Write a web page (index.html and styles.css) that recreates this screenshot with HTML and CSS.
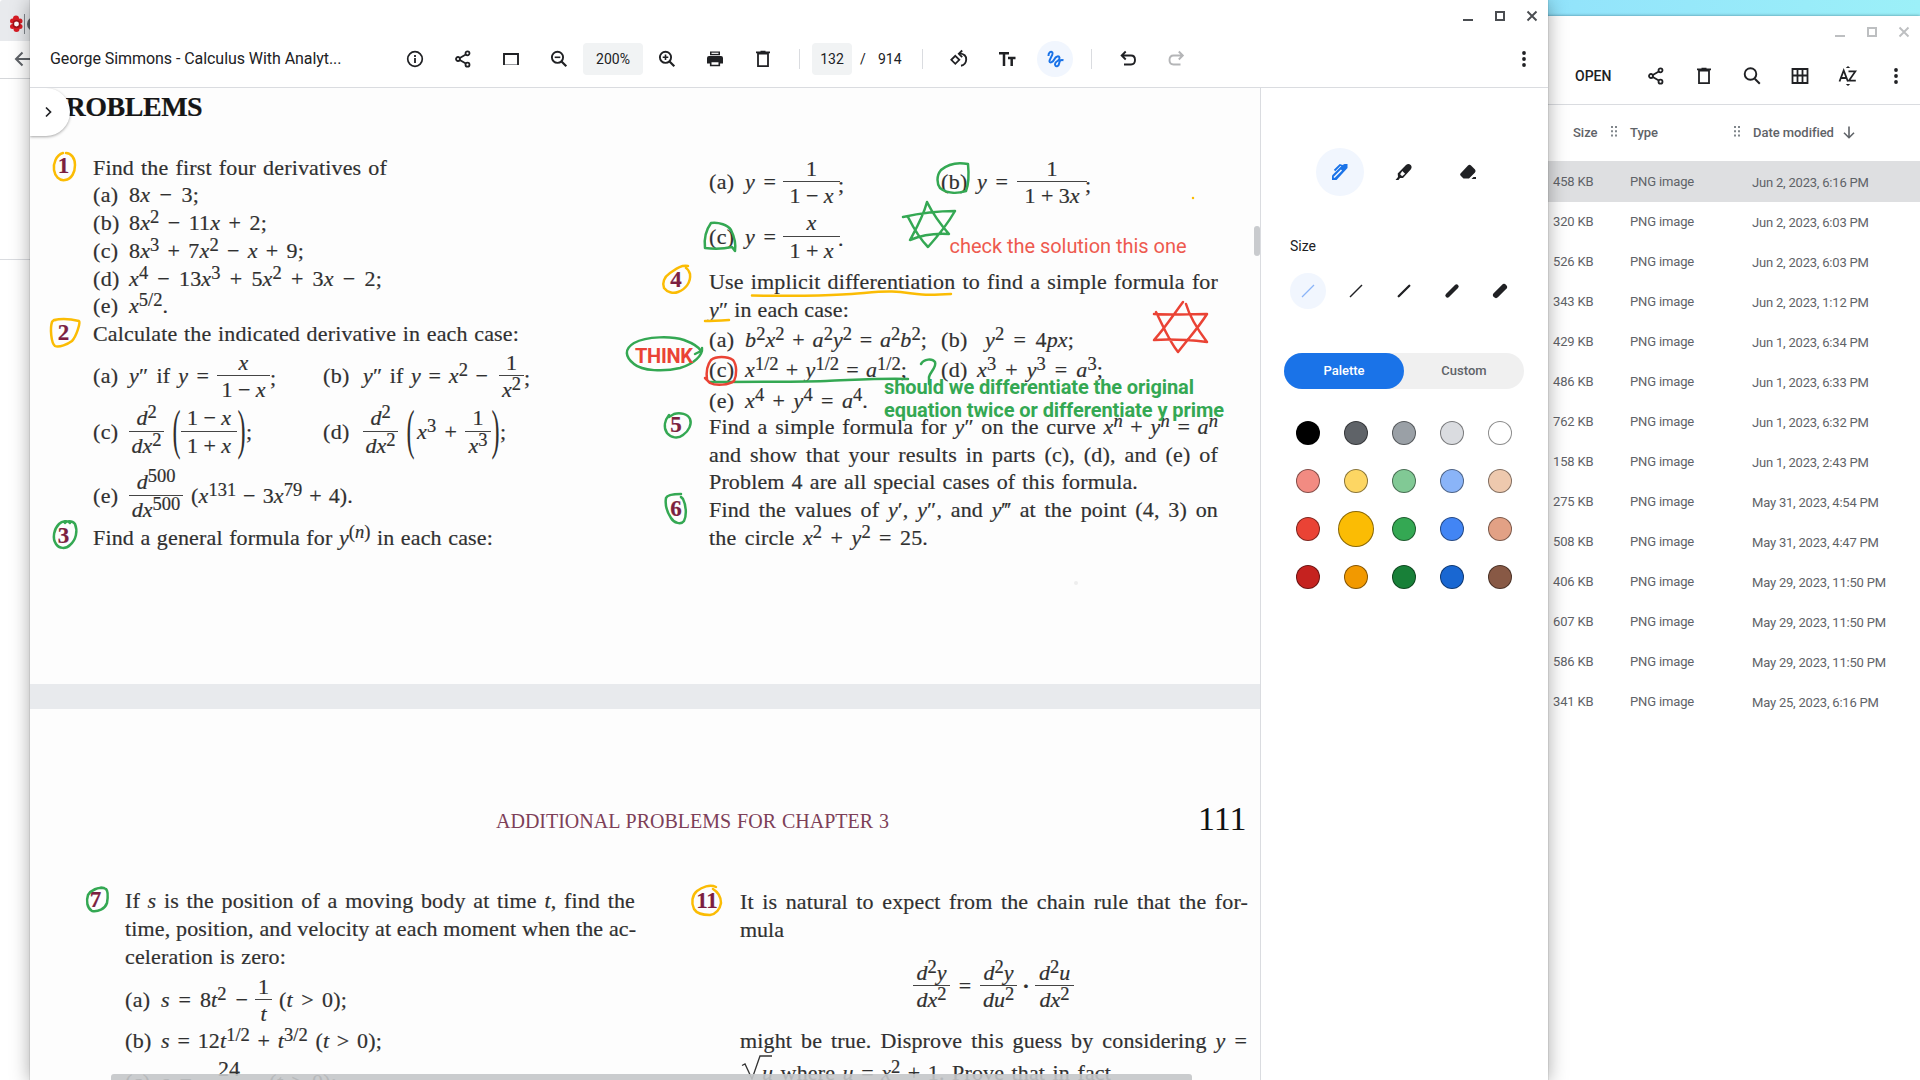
FILE: index.html
```
<!DOCTYPE html>
<html lang="en">
<head>
<meta charset="utf-8">
<title>Gallery</title>
<link rel="stylesheet" href="styles.css">
</head>
<body>
<svg width="0" height="0" class="defs">
  <defs>
    <symbol id="share" viewBox="0 0 20 20"><g fill="none" stroke="currentColor" stroke-width="1.8"><circle cx="14.5" cy="4.3" r="2"/><circle cx="5" cy="10" r="2"/><circle cx="14.5" cy="15.7" r="2"/><path d="M6.8 9l6-3.6M6.8 11l6 3.6"/></g></symbol>
    <symbol id="trash" viewBox="0 0 20 20"><path d="M5 4.5h10V17.100H5z M3 3.400h14M7.500 2.600h5" fill="none" stroke="currentColor" stroke-width="1.800"/></symbol>
    <symbol id="dots" viewBox="0 0 20 20"><g fill="currentColor"><circle cx="10" cy="4" r="1.900"/><circle cx="10" cy="10" r="1.900"/><circle cx="10" cy="16" r="1.900"/></g></symbol>
    <symbol id="min" viewBox="0 0 20 20"><path d="M5 14h10" stroke="currentColor" stroke-width="2"/></symbol>
    <symbol id="max" viewBox="0 0 20 20"><path d="M6 6h8v8H6z" fill="none" stroke="currentColor" stroke-width="2"/></symbol>
    <symbol id="close" viewBox="0 0 20 20"><path d="M5.500 5.500l9 9M14.500 5.500l-9 9" stroke="currentColor" stroke-width="1.900"/></symbol>
    <symbol id="grip" viewBox="0 0 10 14"><path d="M2 2h2M6 2h2M2 6.300h2M6 6.300h2M2 10.600h2M6 10.600h2" stroke="#80868b" stroke-width="2"/></symbol>
  </defs>
</svg>
<div class="desktop">

  <section class="browser">
    <div class="tabs"><svg width="30" height="41" viewBox="0 0 30 41"><g fill="#d81c24"><circle cx="16" cy="18.500" r="3"/><circle cx="20" cy="21" r="2.500"/><circle cx="20" cy="26.500" r="2.500"/><circle cx="16.500" cy="29" r="3"/><circle cx="12.500" cy="26.500" r="2.500"/><circle cx="12.500" cy="21" r="2.500"/></g><circle cx="16.500" cy="24" r="3.200" fill="#fff" stroke="#a01018" stroke-width="1.500"/><path d="M24.500 14v20" stroke="#80868b"/><circle cx="34" cy="24" r="7" fill="#5f6368"/></svg></div>
    <div class="nav"><svg width="30" height="36" viewBox="0 0 30 36"><path d="M34 18H16M22.500 11.500L16 18l6.500 6.500" fill="none" stroke="#5f6368" stroke-width="2"/></svg></div>
    <div class="pane"></div>
  </section>

  <section class="files">
    <div class="wbtns pale"><svg><use href="#min"/></svg><svg><use href="#max"/></svg><svg><use href="#close"/></svg></div>
    <div class="fbar">
      <span class="open">OPEN</span>
      <svg><use href="#share"/></svg>
      <svg><use href="#trash"/></svg>
      <svg viewBox="0 0 20 20"><path d="M12.800 12.800l5 5" stroke="currentColor" stroke-width="2"/><circle cx="8.500" cy="8" r="5.800" fill="none" stroke="currentColor" stroke-width="1.900"/></svg>
      <svg viewBox="0 0 20 20"><path d="M2.500 3h15v14h-15zM7.500 3v14M12.500 3v14M2.500 9.500h15" fill="none" stroke="currentColor" stroke-width="1.800"/></svg>
      <svg viewBox="0 0 20 20"><path d="M1.500 15.500L5.700 4.500 9.900 15.500M3 12h5.500M10.500 5.400h6.800L11 14.600h6.800" fill="none" stroke="currentColor" stroke-width="1.800"/><path d="M10 0l2.200 2H7.800zM10 20l2.200-2H7.800z" fill="currentColor"/></svg>
      <svg><use href="#dots"/></svg>
    </div>
    <div class="fhead"><span class="c-size">Size</span><svg class="grip"><use href="#grip"/></svg><span class="c-type">Type</span><svg class="grip"><use href="#grip"/></svg><span class="c-date">Date modified</span><svg class="arrow" viewBox="0 0 16 16"><path d="M8 2.500v11M3 8.700l5 5 5-5" fill="none" stroke="#5f6368" stroke-width="1.600"/></svg></div>
    <div class="rows">
      <div class="frow on"><span>458 KB</span><span>PNG image</span><span>Jun 2, 2023, 6:16 PM</span></div>
      <div class="frow"><span>320 KB</span><span>PNG image</span><span>Jun 2, 2023, 6:03 PM</span></div>
      <div class="frow"><span>526 KB</span><span>PNG image</span><span>Jun 2, 2023, 6:03 PM</span></div>
      <div class="frow"><span>343 KB</span><span>PNG image</span><span>Jun 2, 2023, 1:12 PM</span></div>
      <div class="frow"><span>429 KB</span><span>PNG image</span><span>Jun 1, 2023, 6:34 PM</span></div>
      <div class="frow"><span>486 KB</span><span>PNG image</span><span>Jun 1, 2023, 6:33 PM</span></div>
      <div class="frow"><span>762 KB</span><span>PNG image</span><span>Jun 1, 2023, 6:32 PM</span></div>
      <div class="frow"><span>158 KB</span><span>PNG image</span><span>Jun 1, 2023, 2:43 PM</span></div>
      <div class="frow"><span>275 KB</span><span>PNG image</span><span>May 31, 2023, 4:54 PM</span></div>
      <div class="frow"><span>508 KB</span><span>PNG image</span><span>May 31, 2023, 4:47 PM</span></div>
      <div class="frow"><span>406 KB</span><span>PNG image</span><span>May 29, 2023, 11:50 PM</span></div>
      <div class="frow"><span>607 KB</span><span>PNG image</span><span>May 29, 2023, 11:50 PM</span></div>
      <div class="frow"><span>586 KB</span><span>PNG image</span><span>May 29, 2023, 11:50 PM</span></div>
      <div class="frow"><span>341 KB</span><span>PNG image</span><span>May 25, 2023, 6:16 PM</span></div>
    </div>
  </section>

  <main class="gallery">
    <div class="wbtns"><svg><use href="#min"/></svg><svg><use href="#max"/></svg><svg><use href="#close"/></svg></div>
    <header class="toolbar">
      <span class="title">George Simmons - Calculus With Analyt...</span>
      <b class="btn"><svg viewBox="0 0 20 20"><circle cx="10" cy="10" r="7.300" fill="none" stroke="currentColor" stroke-width="1.700"/><path d="M10 9v5M10 6v2" stroke="currentColor" stroke-width="1.800"/></svg></b>
      <b class="btn"><svg><use href="#share"/></svg></b>
      <b class="btn"><svg viewBox="0 0 20 20"><path d="M3 16V5h14v11" fill="none" stroke="currentColor" stroke-width="1.900"/><path d="M4 15.500h12" stroke="#9a9ca0"/></svg></b>
      <b class="btn"><svg viewBox="0 0 20 20"><path d="M12.300 12.300l5 5" stroke="currentColor" stroke-width="2.200"/><circle cx="8.500" cy="8.300" r="5.600" fill="none" stroke="currentColor" stroke-width="1.900"/><path d="M5.700 8.300h5.600" stroke="currentColor" stroke-width="1.600"/></svg></b>
      <span class="field zoom">200%</span>
      <b class="btn"><svg viewBox="0 0 20 20"><path d="M12.300 12.300l5 5" stroke="currentColor" stroke-width="2.200"/><circle cx="8.500" cy="8.300" r="5.600" fill="none" stroke="currentColor" stroke-width="1.900"/><path d="M5.700 8.300h5.600M8.500 5.500v5.600" stroke="currentColor" stroke-width="1.600"/></svg></b>
      <b class="btn"><svg viewBox="0 0 20 20"><path d="M5 2.500h10v3.800H5zM4 7h12q2 0 2 2v5.500h-3V12H5v2.500H2V9q0-2 2-2z" fill="currentColor"/><path d="M5.700 12.500h8.600v4H5.700z" fill="#fff" stroke="currentColor" stroke-width="1.600"/><path d="M6.500 4.300h7" stroke="#fff" stroke-width="1.200"/></svg></b>
      <b class="btn"><svg><use href="#trash"/></svg></b>
      <i class="rule"></i>
      <span class="field page-no">132</span><span class="slash">/</span><span class="total">914</span>
      <i class="rule second"></i>
      <b class="btn"><svg viewBox="0 0 20 20"><path d="M6.300 6.800l4 4-4 4-4-4z" fill="none" stroke="currentColor" stroke-width="1.800"/><path d="M10.500 4.600c4.500 0 7 2.400 6.700 6.200-.2 3-2.200 5.400-5.200 6" fill="none" stroke="currentColor" stroke-width="1.900"/><path d="M13.200 1.500L9.800 4.800l3.400 3.400" fill="none" stroke="currentColor" stroke-width="1.800"/></svg></b>
      <b class="btn"><svg viewBox="0 0 20 20"><path d="M2 4.300h10M7 4v13M11 9h7.500M14.700 9v8" fill="none" stroke="currentColor" stroke-width="2.500"/></svg></b>
      <b class="btn active"><svg viewBox="0 0 20 20"><path d="M3.500 7C3.200 3.500 6 1.800 7.300 3.300 9 5.300 4 10 4.500 12.500c.5 2 3.500.5 5-2.500 1.400-3 4.500-3.500 5-1.200.6 2.500-2.500 3-4 5-1.300 2 .2 4 2 3.300 2.200-.9 1.500-4.300 2.500-5.300.8-.8 2-.9 3.500-.5" fill="none" stroke="currentColor" stroke-width="2"/></svg></b>
      <i class="rule third"></i>
      <b class="btn"><svg viewBox="0 0 20 20"><path d="M4.500 6.500H13q4 0 4 4.500t-4 4.500H6M7.700 2.500l-4 4 4 4" fill="none" stroke="currentColor" stroke-width="1.900"/></svg></b>
      <b class="btn off"><svg viewBox="0 0 20 20"><path d="M16 6.500H7.500q-4 0-4 4.500t4 4.500h7M12.800 2.500l4 4-4 4" fill="none" stroke="currentColor" stroke-width="1.900"/></svg></b>
      <b class="btn more"><svg><use href="#dots"/></svg></b>
    </header>
    <div class="work">
      <div class="doc">
        <article class="page p1">
          <h1>PROBLEMS</h1>
          <div class="cols">
            <div class="col">
              <div class="row"><span class="num">1</span><span class="fit w-294">Find the first four derivatives of</span></div>
              <div class="row sub"><span class="lab">(a)</span><span class="fit w-70">8<i>x</i> − 3;</span></div>
              <div class="row sub"><span class="lab">(b)</span><span class="fit w-138">8<i>x</i><sup>2</sup> − 11<i>x</i> + 2;</span></div>
              <div class="row sub"><span class="lab">(c)</span><span class="fit w-175">8<i>x</i><sup>3</sup> + 7<i>x</i><sup>2</sup> − <i>x</i> + 9;</span></div>
              <div class="row sub"><span class="lab">(d)</span><span class="fit w-253"><i>x</i><sup>4</sup> − 13<i>x</i><sup>3</sup> + 5<i>x</i><sup>2</sup> + 3<i>x</i> − 2;</span></div>
              <div class="row sub"><span class="lab">(e)</span><span><i>x</i><sup>5/2</sup>.</span></div>
              <div class="row"><span class="num">2</span><span class="fit w-426">Calculate the indicated derivative in each case:</span></div>
              <div class="row sub h-57"><span class="lab">(a)</span><span class="fit w-80"><i>y</i>″ if <i>y</i> =</span><span class="frac g-8 w-53"><span><i>x</i></span><span>1 − <i>x</i></span></span><span class="end w-53">;</span><span class="lab">(b)</span><span class="fit g-4 w-125"><i>y</i>″ if <i>y</i> = <i>x</i><sup>2</sup> −</span><span class="frac g-11 w-25"><span>1</span><span><i>x</i><sup>2</sup></span></span><span class="end">;</span></div>
              <div class="row sub h-55"><span class="lab">(c)</span><span class="frac w-35"><span><i>d</i><sup>2</sup></span><span><i>dx</i><sup>2</sup></span></span><span class="paren g-8">(</span><span class="frac w-56"><span>1 − <i>x</i></span><span>1 + <i>x</i></span></span><span class="paren">)</span><span class="w-77">;</span><span class="lab">(d)</span><span class="frac g-4 w-35"><span><i>d</i><sup>2</sup></span><span><i>dx</i><sup>2</sup></span></span><span class="paren wide">(</span><span class="fit w-40"><i>x</i><sup>3</sup> +</span><span class="frac g-8 w-26"><span>1</span><span><i>x</i><sup>3</sup></span></span><span class="paren">)</span><span class="tail">;</span></div>
              <div class="row sub h-64"><span class="lab">(e)</span><span class="frac w-54"><span><i>d</i><sup>500</sup></span><span><i>dx</i><sup>500</sup></span></span><span class="fit g-8 w-162">(<i>x</i><sup>131</sup> − 3<i>x</i><sup>79</sup> + 4).</span></div>
              <div class="row"><span class="num">3</span><span class="fit w-400">Find a general formula for <i>y</i><sup>(<i>n</i>)</sup> in each case:</span></div>
            </div>
            <div class="col right">
              <div class="row sub h-58"><span class="lab">(a)</span><span class="fit w-31"><i>y</i> =</span><span class="frac g-7 w-57"><span>1</span><span>1 − <i>x</i></span></span><span class="end w-101">;</span><span class="lab">(b)</span><span class="fit w-31"><i>y</i> =</span><span class="frac g-9 w-70"><span>1</span><span>1 + 3<i>x</i></span></span><span class="end">;</span></div>
              <div class="row sub h-53"><span class="lab">(c)</span><span class="fit w-31"><i>y</i> =</span><span class="frac g-7 w-57"><span><i>x</i></span><span>1 + <i>x</i></span></span><span class="end stop">.</span></div>
              <div class="row t-4"><span class="num">4</span><span class="fit w-509">Use implicit differentiation to find a simple formula for</span></div>
              <div class="row sub"><span class="fit w-140"><i>y</i>″ in each case:</span></div>
              <div class="row sub t-3"><span class="lab">(a)</span><span class="fit w-182"><i>b</i><sup>2</sup><i>x</i><sup>2</sup> + <i>a</i><sup>2</sup><i>y</i><sup>2</sup> = <i>a</i><sup>2</sup><i>b</i><sup>2</sup>;</span><span class="lab g-14">(b)</span><span class="fit g-8 w-89"><i>y</i><sup>2</sup> = 4<i>px</i>;</span></div>
              <div class="row sub t-2"><span class="lab">(c)</span><span class="fit w-162"><i>x</i><sup>1/2</sup> + <i>y</i><sup>1/2</sup> = <i>a</i><sup>1/2</sup>;</span><span class="lab g-34">(d)</span><span class="fit w-126"><i>x</i><sup>3</sup> + <i>y</i><sup>3</sup> = <i>a</i><sup>3</sup>;</span></div>
              <div class="row sub t-3"><span class="lab">(e)</span><span class="fit w-123"><i>x</i><sup>4</sup> + <i>y</i><sup>4</sup> = <i>a</i><sup>4</sup>.</span></div>
              <div class="row up"><span class="num">5</span><span class="fit w-509">Find a simple formula for <i>y</i>″ on the curve <i>x<sup>n</sup></i> + <i>y<sup>n</sup></i> = <i>a<sup>n</sup></i></span></div>
              <div class="row sub"><span class="fit w-509">and show that your results in parts (c), (d), and (e) of</span></div>
              <div class="row sub"><span class="fit w-429">Problem 4 are all special cases of this formula.</span></div>
              <div class="row"><span class="num">6</span><span class="fit w-509">Find the values of <i>y</i>′, <i>y</i>″, and <i>y</i>‴ at the point (4, 3) on</span></div>
              <div class="row sub"><span class="fit w-219">the circle <i>x</i><sup>2</sup> + <i>y</i><sup>2</sup> = 25.</span></div>
            </div>
          </div>
        </article>
        <div class="gap"></div>
        <article class="page p2">
          <div class="running"><span class="chapter">ADDITIONAL PROBLEMS FOR CHAPTER 3</span><span class="folio">111</span></div>
          <div class="cols">
            <div class="col">
              <div class="row"><span class="num">7</span><span class="fit w-510">If <i>s</i> is the position of a moving body at time <i>t</i>, find the</span></div>
              <div class="row sub"><span class="fit w-510">time, position, and velocity at each moment when the ac-</span></div>
              <div class="row sub"><span class="fit w-161">celeration is zero:</span></div>
              <div class="row sub h-58"><span class="lab">(a)</span><span class="fit w-87"><i>s</i> = 8<i>t</i><sup>2</sup> −</span><span class="frac g-7 w-17"><span>1</span><span><i>t</i></span></span><span class="fit g-7 w-68">(<i>t</i> &gt; 0);</span></div>
              <div class="row sub h-24"><span class="lab">(b)</span><span class="fit w-221"><i>s</i> = 12<i>t</i><sup>1/2</sup> + <i>t</i><sup>3/2</sup> (<i>t</i> &gt; 0);</span></div>
              <div class="row sub h-59"><span class="lab">(c)</span><span class="fit w-31"><i>s</i> =</span><span class="frac g-22 w-30"><span>24</span><span><i>t</i></span></span><span class="fit g-25 w-68">(<i>t</i> &gt; 0);</span></div>
            </div>
            <div class="col right">
              <div class="row"><span class="num">11</span><span class="fit w-508">It is natural to expect from the chain rule that the for-</span></div>
              <div class="row sub"><span>mula</span></div>
              <div class="row display h-84"><span class="frac w-37"><span><i>d</i><sup>2</sup><i>y</i></span><span><i>dx</i><sup>2</sup></span></span><span class="op">=</span><span class="frac w-37"><span><i>d</i><sup>2</sup><i>y</i></span><span><i>du</i><sup>2</sup></span></span><span class="dot">·</span><span class="frac w-39"><span><i>d</i><sup>2</sup><i>u</i></span><span><i>dx</i><sup>2</sup></span></span></div>
              <div class="row sub h-24"><span class="fit w-507">might be true. Disprove this guess by considering <i>y</i> =</span></div>
              <div class="row sub h-40"><svg class="root" viewBox="0 0 34 26"><path d="M2 10.500l3-1.500 7 15L20 1h12" fill="none" stroke="#333" stroke-width="1.300"/></svg><span class="fit w-349"><i>u</i> where <i>u</i> = <i>x</i><sup>2</sup> + 1. Prove that in fact</span></div>
            </div>
          </div>
        </article>
        <svg class="ink" viewBox="30 88 1230 992">
          <g fill="none" stroke="#fbbc04" stroke-width="2.500" stroke-linecap="round" stroke-linejoin="round">
            <path d="M63 153C56 155 53 164 54 170c1 6 5 11 11 10 7-1 10-8 10-15 0-7-4-12-9-12"/>
            <path d="M54 320C63 318 75 320 79 321c2 1-3 16-7 20-4 3-13 7-17 5-4-3-5-18-3-24 1-2 3-2 4-2"/>
            <path d="M688 266C680 265 676 269 670 273c-6 4-8 10-6 15 3 4 9 6 14 4 8-3 13-10 12-18-1-3-2-5-4-6"/>
            <path d="M752 295.500c30 .5 60 1 90-1 20-1 36-3.500 50-3 14 .5 20 2.500 30 3 10 .5 20 0 29-.5"/>
            <path d="M705 321c8 0 16-.5 24-1"/>
            <path d="M716 887c-6-3-14 0-19 4-5 4-6 12-3 18 3 5 10 6 16 6 6-1 10-6 11-12 0-6-3-11-8-14"/>
            <path d="M1193 198h.01"/>
          </g>
          <g fill="none" stroke="#34a853" stroke-width="2.500" stroke-linecap="round" stroke-linejoin="round">
            <path d="M70 523c-2-3-8-2-11 1-5 5-7 14-3 20 3 5 10 5 14 1 6-5 8-14 5-21-3-4-9-3-10-1"/>
            <path d="M669 415c-4 5-6 12-2 18 4 5 11 6 16 2 6-4 9-11 7-16-2-5-10-7-16-5l-5 3"/>
            <path d="M681 494c-7 0-14 1-15 4-1 6 1 14 5 20 3 5 10 7 13 3 3-6 2-16-1-22l-2-2"/>
            <path d="M104 888c-6-1-13 2-16 7-2 6-1 13 4 16 6 1 13-2 15-8 1-6 1-12-1-14-4-2-9-1-12 1"/>
            <path d="M968 164c-10-2-20 0-27 6-5 6-4 14-1 18 6 5 16 6 26 3 3-8 3-17 2-27"/>
            <path d="M705 248c-1-8 1-18 6-25 8-1 17 2 20 7 3 6 5 14 4 21l-3-4c-9 2-18 2-27 1"/>
            <path d="M903 217c18-4 35-6 52-6-8 14-18 26-27 36-8-8-14-18-20-30M927 202c-4 15-11 27-17 38 12-5 25-7 39-6-8-9-16-20-22-32"/>
            <path d="M702 348c1 7-8 16-22 20-16 4-38 3-46-4-9-7-10-15 0-21 13-7 38-7 50-3 8 3 15 7 17 11l-6 3"/>
            <path d="M710 382c30 0 80 0 116-1 28-1 56-3 82-2"/>
            <path d="M921 364c3-5 11-6 14-2 2 5-5 10-6 15v7"/>
          </g>
          <g fill="none" stroke="#ea4335" stroke-width="2.500" stroke-linecap="round" stroke-linejoin="round">
            <path d="M707 380c-1-8 0-15 4-20 5-4 16-4 22 0 4 5 4 15 1 21-5 4-18 5-24 2l-5-5"/>
            <path d="M1154 314c18 1 35 0 53 0-8 13-19 25-29 38-9-11-15-26-22-40M1183 302c-9 12-18 26-29 38 17-1 35 0 53 2-9-12-17-24-21-38"/>
          </g>
          <circle cx="1076" cy="583" r="2" fill="#eee"/>
          <g font-family="Roboto, sans-serif" font-size="20">
            <text x="949.500" y="252.500" textLength="237" fill="#ee5a4f">check the solution this one</text>
            <text x="635" y="363" textLength="58" font-weight="700" fill="#ea4335">THINK</text>
            <text x="884" y="393.500" textLength="310" font-weight="700" fill="#34a853">should we differentiate the original</text>
            <text x="884" y="416.500" textLength="340" font-weight="700" fill="#34a853">equation twice or differentiate y prime</text>
          </g>
        </svg>
        <div class="expand"><svg viewBox="0 0 12 12" width="12" height="12"><path d="M4 1.500L8.500 6 4 10.500" fill="none" stroke="#202124" stroke-width="1.700"/></svg></div>
        <div class="vbar"></div>
        <div class="hbar"></div>
      </div>
      <aside class="panel">
        <div class="tools">
          <b class="on"><svg viewBox="0 0 20 20"><path d="M2 18v-4.500L12.500 3 14.500 2h3v4L6.500 18z" fill="currentColor"/><path d="M4.500 8.500L10 3l3 1" fill="none" stroke="currentColor" stroke-width="1.800"/><path d="M4 15.500L11.500 8" stroke="#f1f6fe" stroke-width="1.600"/></svg></b>
          <b><svg viewBox="0 0 20 20"><path d="M1.500 18l2.500-3-.3-3.500L12 3q2.500-2 4.700 0 1.800 2 0 4.500L9 16H6l-1.500 2z" fill="currentColor"/><path d="M8.300 9l2.800 2.800-3 2.500-2-2z" fill="#fff"/></svg></b>
          <b><svg viewBox="0 0 20 20"><path d="M2.500 11.500l7.500-8q1.500-1.500 3 0l4 4q1.200 1.500 0 3L11 16.500H5.500L2.500 13.500q-.8-1 0-2zM13.500 17l2-2H18v2z" fill="currentColor"/></svg></b>
        </div>
        <div class="label">Size</div>
        <div class="sizes">
          <b class="on"><svg viewBox="0 0 20 20"><path d="M4 16L16 4" stroke="#8ab4f8" stroke-width="1.300"/></svg></b>
          <b><svg viewBox="0 0 20 20"><path d="M4 16L16 4" stroke="#202124" stroke-width="1.500"/></svg></b>
          <b><svg viewBox="0 0 20 20"><path d="M4.700 15.300L15.300 4.700" stroke="#202124" stroke-width="2.300" stroke-linecap="round"/></svg></b>
          <b><svg viewBox="0 0 20 20"><path d="M5.500 14.500l9-9" stroke="#202124" stroke-width="4.300" stroke-linecap="round"/></svg></b>
          <b><svg viewBox="0 0 20 20"><path d="M6 14l8-8" stroke="#202124" stroke-width="6" stroke-linecap="round"/></svg></b>
        </div>
        <div class="toggle"><span class="sel">Palette</span><span>Custom</span></div>
        <div class="swatches">
          <i class="k1"></i><i class="k2"></i><i class="k3"></i><i class="k4"></i><i class="k5"></i>
          <i class="l1"></i><i class="l2"></i><i class="l3"></i><i class="l4"></i><i class="l5"></i>
          <i class="m1"></i><i class="m2 picked"></i><i class="m3"></i><i class="m4"></i><i class="m5"></i>
          <i class="n1"></i><i class="n2"></i><i class="n3"></i><i class="n4"></i><i class="n5"></i>
        </div>
      </aside>
    </div>
  </main>
</div>
</body>
</html>
```
FILE: styles.css
```
* { box-sizing: border-box; }
body { margin: 0; font-family: Roboto, sans-serif; color: #202124; overflow: hidden; }
.defs { position: absolute; }
.desktop { position: relative; width: 1920px; height: 1080px; overflow: hidden; background: linear-gradient(90deg, #7fd8ff 65%, #93e4fb 82%, #9cf0f8); }
svg { flex: none; width: 20px; height: 20px; display: block; }

/* windows on the desktop */
.browser { position: absolute; left: 0; top: 0; width: 60px; height: 1080px; background: #fff; }
.tabs { height: 41px; background: #e8eaed; border-top-left-radius: 3px; }
.tabs svg { width: 30px; height: 41px; }
.nav { height: 38px; border-bottom: 1px solid #d5d7da; }
.nav svg { width: 30px; height: 36px; }
.pane { height: 181px; border-bottom: 1px solid #dadce0; }
.files { position: absolute; left: 1400px; top: 16px; width: 520px; height: 1064px; background: #fff; box-shadow: 0 0 3px rgba(0,40,60,.5); }
.gallery { position: absolute; left: 30px; top: 0; width: 1518px; height: 1080px; background: #fff; display: flex; flex-direction: column; box-shadow: 0 2px 18px rgba(0,0,0,.35), 0 0 1px rgba(0,0,0,.4); }

.wbtns { display: flex; justify-content: flex-end; gap: 12px; height: 34px; padding: 6px 6px 0 0; color: #4a4d51; }
.wbtns.pale { padding-top: 6px; height: 32px; color: #bdbfc1; }

/* file list */
.fbar { display: flex; align-items: center; height: 57px; padding: 0 14px 1px 175px; border-bottom: 1px solid #dadce0; }
.fbar .open { width: 71px; font-size: 14px; font-weight: 500; }
.fbar svg + svg { margin-left: 28.1px; }
.fhead { display: flex; align-items: center; height: 56px; padding: 0 0 2px 173px; font-size: 13px; font-weight: 500; color: #5f6368; }
.c-size { width: 36px; }
.c-type { width: 102px; }
.c-date { width: 88px; white-space: nowrap; letter-spacing: -.05px; }
.fhead .grip { width: 10px; height: 14px; margin-right: 11px; }
.fhead .arrow { width: 16px; height: 16px; }
.rows { display: flex; flex-direction: column; }
.frow { display: grid; grid-template-columns: 77px 122px 1fr; align-items: center; height: 40px; padding-left: 153px; font-size: 13px; letter-spacing: -.15px; color: #5f6368; }
.frow span:last-child { padding-top: 2px; letter-spacing: -.2px; }
.frow.on { height: 41px; margin-bottom: -1px; background: #dedfe1; }

/* toolbar */
.toolbar { display: flex; align-items: center; height: 54px; padding: 0 6px 4px 20px; border-bottom: 1px solid #dadce0; }
.title { width: 347px; padding-bottom: 1px; font-size: 16px; letter-spacing: -.06px; white-space: nowrap; }
.btn { display: flex; align-items: center; justify-content: center; width: 36px; height: 36px; margin-right: 12px; border-radius: 50%; flex: none; }
.btn.active { background: #f1f6fe; color: #1a73e8; }
.btn.off { color: #b4b5b7; }
.btn.more { margin: 0 0 0 auto; }
.field { display: flex; align-items: center; justify-content: center; height: 32px; border-radius: 4px; background: #f1f3f4; font-size: 14px; }
.zoom { width: 60px; margin: 0 6px 0 -6px; }
.page-no { width: 40px; margin-left: 12px; }
.slash { width: 26px; padding-left: 8px; font-size: 14px; }
.total { width: 43px; font-size: 14px; }
.rule { width: 1px; height: 20px; background: #dadce0; margin-left: 6px; }
.rule.second { margin: 0 18px 0 1px; }
.rule.third { margin: 0 18px 0 6px; }

.work { display: flex; flex: 1; min-height: 0; }
.doc { position: relative; width: 1231px; height: 992px; overflow: hidden; border-right: 1px solid #dadce0; background: #fdfdfd; }
.panel { flex: 1; padding: 60px 24px 0 23px; }
.tools { display: flex; gap: 16px; padding-left: 32px; }
.tools b { display: grid; place-items: center; width: 48px; height: 48px; border-radius: 50%; }
.tools .on { background: #f1f6fe; color: #1a73e8; }
.label { margin: 42px 0 0 6px; height: 16px; line-height: 16px; font-size: 14px; }
.sizes { display: flex; gap: 12px; margin: 19px 0 0 6px; }
.sizes b { display: grid; place-items: center; width: 36px; height: 36px; border-radius: 50%; }
.sizes .on { background: #f1f6fe; }
.toggle { display: flex; width: 240px; height: 36px; margin-top: 44px; border-radius: 18px; background: #f0f0f0; font-size: 13px; font-weight: 500; color: #5f6368; }
.toggle span { flex: 1; display: grid; place-items: center; padding-bottom: 1px; border-radius: 18px; }
.toggle .sel { background: #1a73e8; color: #fff; }
.swatches { display: grid; grid-template-columns: repeat(5, 48px); grid-auto-rows: 48px; margin-top: 20px; place-items: center; }
.swatches i { width: 24px; height: 24px; border-radius: 50%; border: 1px solid rgba(0,0,0,.45); }
.swatches .picked { width: 36px; height: 36px; }
.k1 { background: #000; } .k2 { background: #5f6368; } .k3 { background: #9aa0a6; } .k4 { background: #dadce0; } .k5 { background: #fff; }
.l1 { background: #f28b82; } .l2 { background: #fdd663; } .l3 { background: #81c995; } .l4 { background: #8ab4f8; } .l5 { background: #eec9ae; }
.m1 { background: #ea4335; } .m2 { background: #fbbc04; } .m3 { background: #34a853; } .m4 { background: #4285f4; } .m5 { background: #e2a185; }
.n1 { background: #c5221f; } .n2 { background: #f29900; } .n3 { background: #188038; } .n4 { background: #1967d2; } .n5 { background: #885945; }

/* textbook pages */
.page { font-family: "Liberation Serif", serif; font-size: 22px; color: #303030; -webkit-text-stroke: .2px currentColor; }
.p1 { height: 596px; }
.page h1 { margin: 0; height: 65.800px; padding: 2.500px 0 0 19px; font-size: 28px; line-height: 32px; letter-spacing: -.5px; color: #161616; }
.gap { height: 25px; background: #e8eaed; }
.cols { display: flex; }
.col { width: 616px; flex: none; --pitch: 27.750px; }
.p2 { padding-top: 91px; }
.p2 .col { padding-left: 32px; padding-top: 1px; --pitch: 28px; }
.p2 .right { width: 615px; padding-left: 31px; padding-top: 2px; }
.running { display: flex; align-items: center; height: 40px; margin-bottom: 46.300px; }
.chapter { width: 393px; margin: 3px 309px 0 466px; font-size: 20px; white-space: nowrap; color: #7d4058; text-align-last: justify; -webkit-text-stroke: 0; }
.folio { font-size: 34px; color: #111; margin-top: -2px; -webkit-text-stroke: 0; }
.row { display: flex; align-items: center; height: var(--pitch); line-height: 28px; white-space: nowrap; }
.row.sub { padding-left: 63px; }
.num { width: 63px; padding-left: 4px; text-align: center; font-weight: 700; font-size: 23px; color: #7c1f40; flex: none; margin-top: -3px; }
.right .num { padding: 0 3px 0 0; }
.lab { width: 36px; flex: none; letter-spacing: .3px; }
.fit { text-align: justify; text-align-last: justify; flex: none; letter-spacing: .15px; }
.row sup { font-size: 18.500px; line-height: 0; vertical-align: 7.500px; letter-spacing: 0; }
.frac { display: flex; flex-direction: column; flex: none; text-align: center; }
.frac > span { height: 27.500px; line-height: 28px; }
.frac > span:first-child { border-bottom: 1.500px solid #444; line-height: 27px; }
.end { padding: 3px 0 0; flex: none; }
.right .end { margin: 2px 2px 0 -2px; }
.paren { width: 9px; text-align: center; transform: scale(1.100, 2.500) translateY(-.5px); -webkit-text-stroke: 0; }
.paren.wide { margin: 0 2px 0 8px; }
.display { padding-left: 236px; }
.op { width: 30px; text-align: center; }
.dot { width: 18px; text-align: center; font-weight: 700; }
.row .root { width: 34px; height: 26px; margin: -10px -12px 0 0; }
.h-24 { height: 24.300px; } .h-40 { height: 39.600px; } .h-53 { height: 53.200px; } .h-55 { height: 55.400px; } .h-57 { height: 56.200px; } .h-58 { height: 57.600px; } .h-59 { height: 58px; } .h-64 { height: 64.200px; padding-top: 8.400px; } .h-84 { height: 84.200px; }
.right .h-58 { height: 56.600px; }
.p2 .h-58 { height: 57.600px; }
.t-2 { margin-top: 2.200px; } .t-3 { margin-top: 2.800px; } .t-4 { margin-top: 4.500px; } .up { margin-top: -1.500px; }
.g-4 { margin-left: 4px; } .g-7 { margin-left: 7px; } .g-8 { margin-left: 8px; } .g-9 { margin-left: 9px; } .g-11 { margin-left: 11px; } .g-14 { margin-left: 14px; } .g-22 { margin-left: 22px; } .g-25 { margin-left: 25px; } .g-34 { margin-left: 34px; }
.w-17 { width: 17px; } .w-25 { width: 25px; } .w-26 { width: 26px; } .w-30 { width: 30px; } .w-31 { width: 31px; } .w-35 { width: 35px; } .w-37 { width: 37px; } .w-39 { width: 39px; } .w-40 { width: 40px; } .w-53 { width: 53px; } .w-54 { width: 54px; } .w-56 { width: 56px; } .w-57 { width: 57px; } .w-68 { width: 68px; } .w-70 { width: 70px; } .w-77 { width: 77px; } .w-80 { width: 80px; } .w-87 { width: 87px; } .w-89 { width: 89px; } .w-101 { width: 101px; }
.w-123 { width: 123px; } .w-125 { width: 125px; } .w-126 { width: 126px; } .w-138 { width: 138px; } .w-140 { width: 140px; } .w-161 { width: 161px; } .w-162 { width: 162px; } .w-175 { width: 175px; } .w-182 { width: 182px; } .w-219 { width: 219px; } .w-221 { width: 221px; } .w-253 { width: 253px; } .w-294 { width: 294px; } .w-349 { width: 349px; }
.w-400 { width: 400px; } .w-426 { width: 426px; } .w-429 { width: 429px; } .w-507 { width: 507px; } .w-508 { width: 508px; } .w-509 { width: 509px; } .w-510 { width: 510px; }

/* layers over the pages */
.ink { position: absolute; left: 0; top: 0; width: 1230px; height: 992px; }
.expand { position: absolute; left: 0; top: 0; display: grid; align-items: center; width: 40px; height: 48px; padding-left: 12px; border-radius: 0 24px 24px 0; background: #fff; box-shadow: 0 1px 3px rgba(0,0,0,.35); }
.expand svg { width: 12px; height: 12px; }
.vbar { position: absolute; right: 0; top: 138px; width: 6px; height: 30px; border-radius: 3px; background: #c9cbce; }
.hbar { position: absolute; left: 81px; bottom: 0; width: 1081px; height: 6px; border-radius: 3px 3px 0 0; background: rgba(196,198,201,.9); }
```
